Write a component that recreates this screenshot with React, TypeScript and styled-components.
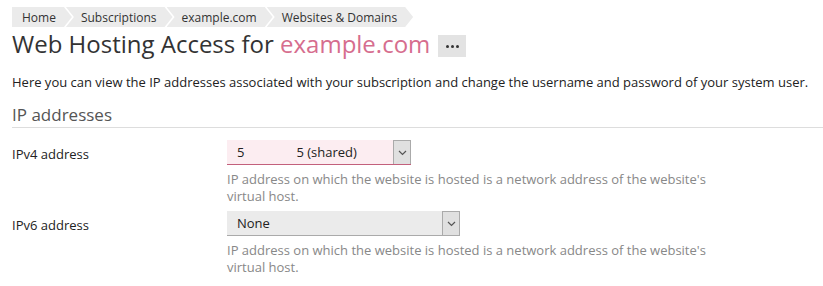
import styled, { createGlobalStyle } from "styled-components";

const GlobalStyle = createGlobalStyle`
    body {
        margin: 0;
        background: #fff;
        font-family: "Open Sans", "Noto Sans", sans-serif;
        font-size: 13px;
        color: #222;
    }
`;

const crumbs = ["Home", "Subscriptions", "example.com", "Websites & Domains"];

const App = () => {
    return (
        <Page>
            <GlobalStyle />
            <Breadcrumbs>
                {crumbs.map((c, i) => (
                    <Crumb key={c} first={i === 0}>
                        {c}
                    </Crumb>
                ))}
            </Breadcrumbs>

            <TitleRow>
                <Title>
                    Web Hosting Access for <Domain>example.com</Domain>
                </Title>
                <MoreButton>
                    <span />
                    <span />
                    <span />
                </MoreButton>
            </TitleRow>

            <Intro>
                Here you can view the IP addresses associated with your
                subscription and change the username and password of your
                system user.
            </Intro>

            <SectionTitle>IP addresses</SectionTitle>

            <FormRow>
                <Label>IPv4 address</Label>
                <Field>
                    <Select width={184} tone="pink">
                        <Value>
                            <span>5</span>
                            <span>5 (shared)</span>
                        </Value>
                        <Arrow>
                            <Chevron />
                        </Arrow>
                    </Select>
                    <Hint>
                        IP address on which the website is hosted is a network
                        address of the website's virtual host.
                    </Hint>
                </Field>
            </FormRow>

            <FormRow>
                <Label>IPv6 address</Label>
                <Field>
                    <Select width={233} tone="grey">
                        <Value>
                            <span>None</span>
                        </Value>
                        <Arrow>
                            <Chevron />
                        </Arrow>
                    </Select>
                    <Hint>
                        IP address on which the website is hosted is a network
                        address of the website's virtual host.
                    </Hint>
                </Field>
            </FormRow>
        </Page>
    );
};

const Chevron = () => (
    <svg width="9" height="6" viewBox="0 0 9 6">
        <path d="M1 1 L4.5 4.5 L8 1" fill="none" stroke="#555" strokeWidth="1.2" />
    </svg>
);

export default App;

const Page = styled.div`
    padding: 7px 0 0 12px;
`;

const Breadcrumbs = styled.div`
    display: flex;
    height: 20px;
`;

const Crumb = styled.div<{ first: boolean }>`
    display: flex;
    align-items: center;
    height: 20px;
    background: #ebebeb;
    color: #333;
    font-size: 12px;
    padding: 0 16px 0 ${(p) => (p.first ? "10px" : "15px")};
    margin-left: ${(p) => (p.first ? "0" : "-6px")};
    clip-path: ${(p) =>
        p.first
            ? "polygon(0 0, calc(100% - 8px) 0, 100% 50%, calc(100% - 8px) 100%, 0 100%)"
            : "polygon(0 0, calc(100% - 8px) 0, 100% 50%, calc(100% - 8px) 100%, 0 100%, 8px 50%)"};
`;

const TitleRow = styled.div`
    display: flex;
    align-items: center;
    gap: 8px;
    margin-top: 2px;
`;

const Title = styled.h1`
    margin: 0;
    font-size: 24px;
    font-weight: 400;
    color: #333;
    line-height: 30px;
`;

const Domain = styled.span`
    color: #d66d8e;
`;

const MoreButton = styled.div`
    display: flex;
    align-items: center;
    justify-content: center;
    gap: 2px;
    width: 28px;
    height: 22px;
    margin-top: 4px;
    background: #e3e3e3;

    span {
        width: 3px;
        height: 3px;
        border-radius: 50%;
        background: #333;
    }
`;

const Intro = styled.p`
    margin: 14px 0 0;
    line-height: 18px;
`;

const SectionTitle = styled.h2`
    margin: 13px 0 0;
    font-size: 17px;
    font-weight: 400;
    color: #555;
    line-height: 22px;
    padding-bottom: 1px;
    border-bottom: 1px solid #ddd;
`;

const FormRow = styled.div`
    display: flex;
    margin-top: 12px;

    & + & {
        margin-top: 6px;
    }
`;

const Label = styled.div`
    width: 215px;
    padding-top: 5px;
    line-height: 18px;
`;

const Field = styled.div`
    display: flex;
    flex-direction: column;
`;

const Select = styled.div<{ width: number; tone: "pink" | "grey" }>`
    display: flex;
    width: ${(p) => p.width}px;
    height: 25px;
    box-sizing: border-box;
    background: ${(p) => (p.tone === "pink" ? "#fcedf1" : "#ebebeb")};
    border-bottom: 1px solid ${(p) => (p.tone === "pink" ? "#c3607c" : "#aaa")};
`;

const Value = styled.div`
    flex: 1;
    display: flex;
    align-items: center;
    gap: 52px;
    padding-left: 10px;
    font-size: 13px;
    color: #222;
`;

const Arrow = styled.div`
    width: 16px;
    display: flex;
    align-items: center;
    justify-content: center;
    background: #e0e0e0;
    border: 1px solid #aaa;
    border-bottom: none;
`;

const Hint = styled.div`
    width: 500px;
    margin-top: 6px;
    color: #888;
    line-height: 17px;
`;
